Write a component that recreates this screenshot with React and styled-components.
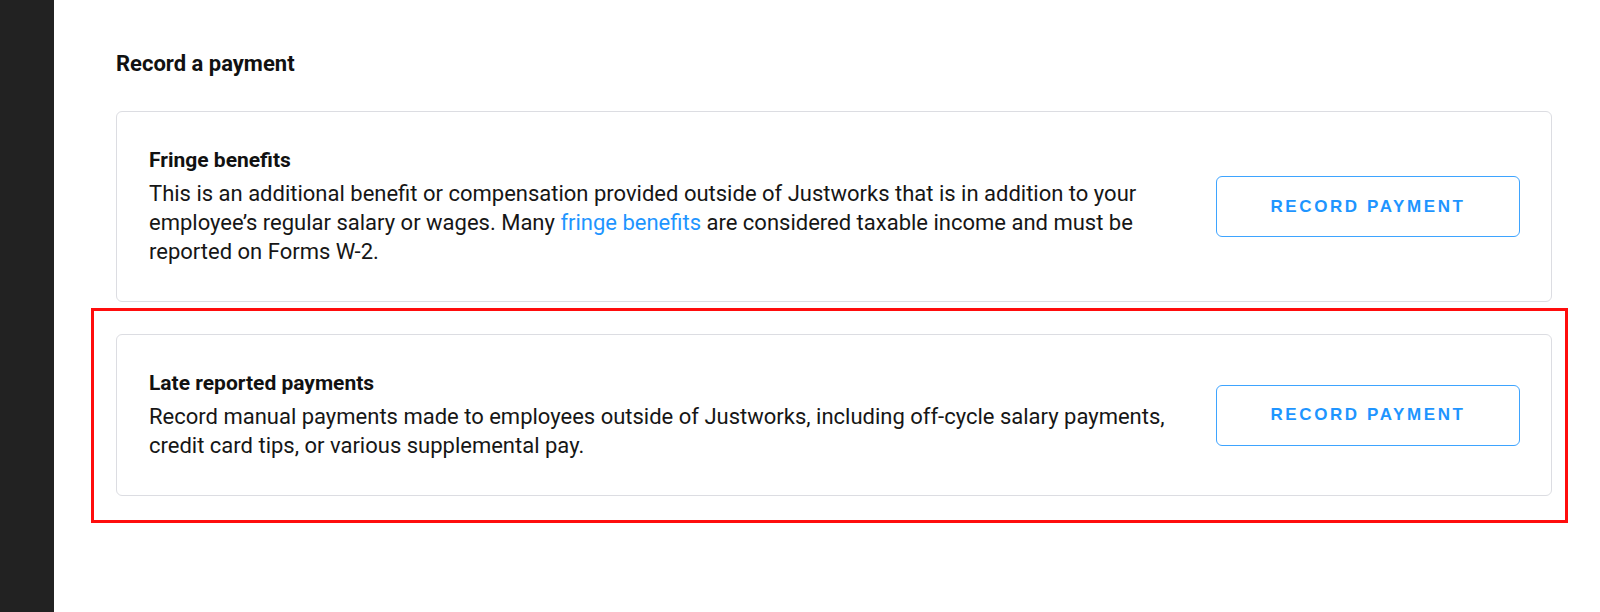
import React from "react";
import styled, { createGlobalStyle } from "styled-components";

const Global = createGlobalStyle`
  html, body { margin: 0; padding: 0; background: #ffffff; }
  body { font-family: Roboto, "Liberation Sans", sans-serif; color: #161616; }
  * { box-sizing: border-box; }
`;

const Page = styled.div`
  display: flex;
  width: 1600px;
  height: 612px;
  overflow: hidden;
`;

const Sidebar = styled.aside`
  flex: 0 0 54px;
  background: #222222;
`;

const Main = styled.main`
  flex: 1;
  padding: 52px 48px 0 62px;
  display: flex;
  flex-direction: column;
`;

const PageTitle = styled.h2`
  margin: 0 0 35px;
  font-size: 22px;
  line-height: 24px;
  font-weight: 700;
  color: #111111;
`;

const Highlight = styled.div`
  margin: 6px -16px 0 -25px;
  padding: 23px 13px 24px 22px;
  border: 3px solid #ff0d0d;
`;

const Card = styled.section`
  display: flex;
  align-items: center;
  justify-content: space-between;
  border: 1px solid #dcdde2;
  border-radius: 6px;
  padding: 35px 31px 35px 32px;
  background: #fff;
`;

const CardText = styled.div`
  max-width: 1035px;
`;

const CardTitle = styled.h3`
  margin: 0 0 6px;
  font-size: 21px;
  line-height: 26px;
  font-weight: 700;
  color: #111111;
`;

const CardBody = styled.p`
  margin: 0;
  font-size: 22px;
  line-height: 29px;
  color: #161616;
`;

const Link = styled.a`
  color: #1e95ff;
  text-decoration: none;
`;

const RecordButton = styled.button`
  flex: 0 0 304px;
  height: 61px;
  border: 1.5px solid #3ea4ff;
  border-radius: 6px;
  background: #fff;
  color: #1e95ff;
  font-family: "Liberation Sans", Arial, sans-serif;
  font-weight: 700;
  font-size: 17px;
  letter-spacing: 2.6px;
  cursor: pointer;
`;

export default function App() {
  return (
    <>
      <Global />
      <Page>
        <Sidebar />
        <Main>
          <PageTitle>Record a payment</PageTitle>
          <Card>
            <CardText>
              <CardTitle>Fringe benefits</CardTitle>
              <CardBody>
                This is an additional benefit or compensation provided outside of Justworks that is in addition to your
                employee’s regular salary or wages. Many <Link href="#">fringe benefits</Link> are considered taxable
                income and must be reported on Forms W-2.
              </CardBody>
            </CardText>
            <RecordButton>RECORD PAYMENT</RecordButton>
          </Card>
          <Highlight>
            <Card>
              <CardText>
                <CardTitle>Late reported payments</CardTitle>
                <CardBody>
                  Record manual payments made to employees outside of Justworks, including off-cycle salary payments,
                  credit card tips, or various supplemental pay.
                </CardBody>
              </CardText>
              <RecordButton>RECORD PAYMENT</RecordButton>
            </Card>
          </Highlight>
        </Main>
      </Page>
    </>
  );
}
